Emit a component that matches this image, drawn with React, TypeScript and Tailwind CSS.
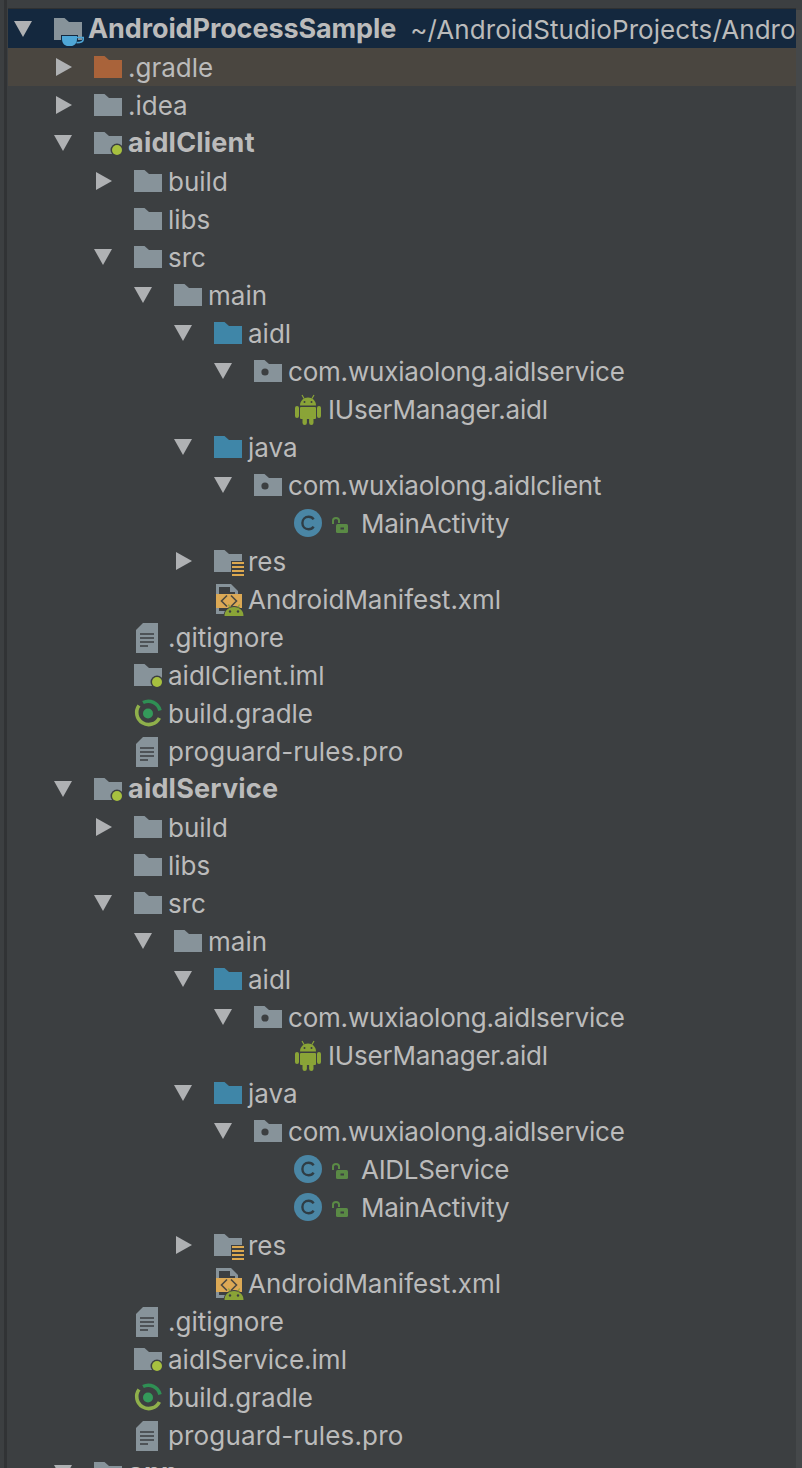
import type { JSX } from "react";

type IconName =
  | "project"
  | "folderOrange"
  | "folder"
  | "module"
  | "source"
  | "pkg"
  | "res"
  | "android"
  | "manifest"
  | "text"
  | "gradle"
  | "cls";

type Row = {
  depth: number;
  arrow?: "open" | "closed";
  icon: IconName;
  label: string;
  hint?: string;
  bold?: boolean;
  lock?: boolean;
  tone?: "selected" | "ignored";
};

const FOLDER = "M0 0H10.5L15 4H28V22H0Z";

const FolderIcon = ({ fill, children }: { fill: string; children?: JSX.Element | JSX.Element[] }) => (
  <svg width="34" height="30" viewBox="0 0 34 30" className="overflow-visible">
    <path d={FOLDER} fill={fill} transform="translate(0 4)" />
    {children}
  </svg>
);

const Glyph = ({ name }: { name: IconName }) => {
  switch (name) {
    case "project":
      return (
        <FolderIcon fill="#87939a">
          <path d="M7 21H24V25C24 30 20.5 33 17 33H14C10.5 33 7 30 7 25Z" fill="#14283e" />
          <path d="M8 22H23V25C23 29.5 20 32 17 32H14C11 32 8 29.5 8 25Z" fill="#4ea6d6" />
          <path d="M23 23.5H29.2V25.5C29.2 27.5 26 28.6 22.5 28.6" fill="none" stroke="#4ea6d6" strokeWidth="1.6" />
        </FolderIcon>
      );
    case "folderOrange":
      return <FolderIcon fill="#a9633a" />;
    case "folder":
      return <FolderIcon fill="#87939a" />;
    case "module":
      return (
        <FolderIcon fill="#87939a">
          <circle cx="23" cy="22" r="6.5" fill="#3c3f41" />
          <circle cx="23" cy="22" r="5" fill="#a7c03f" />
        </FolderIcon>
      );
    case "source":
      return <FolderIcon fill="#3f86a8" />;
    case "pkg":
      return (
        <FolderIcon fill="#87939a">
          <circle cx="11" cy="16" r="3.6" fill="#3c3f41" />
        </FolderIcon>
      );
    case "res":
      return (
        <FolderIcon fill="#87939a">
          <rect x="17" y="15" width="15" height="16" fill="#3c3f41" />
          <path d="M18 17H30M18 21H30M18 25H30M18 29H30" stroke="#dca84f" strokeWidth="1.8" />
        </FolderIcon>
      );
    case "android":
      return (
        <svg width="28" height="30" viewBox="0 0 28 30" className="overflow-visible">
          <path d="M8 1L10 4.5M20 1L18 4.5" stroke="#8aa437" strokeWidth="1.2" />
          <path d="M6 11.5C6 7 9.5 3.5 14 3.5S22 7 22 11.5Z" fill="#8aa437" />
          <circle cx="10.5" cy="8" r="1" fill="#3c3f41" />
          <circle cx="17.5" cy="8" r="1" fill="#3c3f41" />
          <rect x="6" y="13" width="16" height="12" rx="1" fill="#8aa437" />
          <rect x="1" y="12" width="4" height="12" rx="2" fill="#8aa437" />
          <rect x="23" y="12" width="4" height="12" rx="2" fill="#8aa437" />
          <rect x="8.5" y="22" width="4.4" height="9" rx="2.2" fill="#8aa437" />
          <rect x="15.1" y="22" width="4.4" height="9" rx="2.2" fill="#8aa437" />
        </svg>
      );
    case "manifest":
      return (
        <svg width="34" height="30" viewBox="0 0 34 30" className="overflow-visible">
          <path d="M2 0H17L24 7V30H2Z" fill="#87939a" />
          <path d="M5 3H16V8H21V11H5Z" fill="#3c3f41" />
          <rect x="5" y="24" width="16" height="3" fill="#3c3f41" />
          <rect x="2" y="10" width="26" height="14" fill="#dca955" />
          <path d="M13 11.5L7.5 17L13 22.5M17 11.5L22.5 17L17 22.5" fill="none" stroke="#4b4a42" strokeWidth="1.6" />
          <path d="M9.5 33C9.5 26 14 22 20 22S30.5 26 30.5 33Z" fill="#3c3f41" />
          <path d="M10.5 32C10.5 26.5 14.5 23 20 23S29.5 26.5 29.5 32Z" fill="#8aa437" />
          <path d="M14.5 20.5L16 23.5M25.5 20.5L24 23.5" stroke="#8aa437" strokeWidth="1.2" />
          <circle cx="16" cy="27.5" r="1.2" fill="#3c3f41" />
          <circle cx="24" cy="27.5" r="1.2" fill="#3c3f41" />
        </svg>
      );
    case "text":
      return (
        <svg width="28" height="30" viewBox="0 0 28 30" className="overflow-visible">
          <path d="M2 8L9 1H24V31H2Z" fill="#87939a" />
          <path d="M6 12H20M6 16H20M6 20H20M6 24H14" stroke="#3c3f41" strokeWidth="1.6" />
        </svg>
      );
    case "gradle":
      return (
        <svg width="28" height="30" viewBox="0 0 28 30" className="overflow-visible">
          <path d="M5 7.5A12 12 0 1 0 25.4 20" fill="none" stroke="#8fb04b" strokeWidth="3.6" />
          <path d="M9 4.5A12 12 0 0 1 26 12.5" fill="none" stroke="#2f8f54" strokeWidth="3.6" />
          <circle cx="14" cy="15.5" r="5" fill="#349a5a" />
        </svg>
      );
    case "cls":
      return (
        <svg width="28" height="30" viewBox="0 0 28 30" className="overflow-visible">
          <circle cx="14" cy="15" r="14" fill="#4a86a5" />
          <path d="M19.6 11.4C18.5 9.6 16.6 8.8 14.6 8.8C11 8.8 8.4 11.4 8.4 15S11 21.2 14.6 21.2C16.6 21.2 18.5 20.4 19.6 18.6" fill="none" stroke="#2f3d45" strokeWidth="2.4" />
        </svg>
      );
  }
};

const Arrow = ({ kind }: { kind: "open" | "closed" }) =>
  kind === "open" ? (
    <svg width="18" height="16" viewBox="0 0 18 16"><path d="M0 0H18L9 16Z" fill="#afb1b3" /></svg>
  ) : (
    <svg width="16" height="18" viewBox="0 0 16 18" className="ml-[2px]"><path d="M0 0L16 9L0 18Z" fill="#afb1b3" /></svg>
  );

const Lock = () => (
  <svg width="16" height="16" viewBox="0 0 16 16" className="ml-[4px] mr-[13px] mt-[3px]">
    <path d="M1 7V3.5C1 1.9 2.3 1 4 1S7 1.9 7 3.5V6" fill="none" stroke="#5a8a45" strokeWidth="2" />
    <rect x="4" y="7" width="12" height="9" rx="1.5" fill="#5a8a45" />
    <rect x="8.5" y="10.5" width="3.5" height="2" fill="#3c3f41" />
  </svg>
);

const moduleRows = (name: string, pkg: string, classes: string[]): Row[] => [
  { depth: 1, arrow: "open", icon: "module", label: name, bold: true },
  { depth: 2, arrow: "closed", icon: "folder", label: "build" },
  { depth: 2, icon: "folder", label: "libs" },
  { depth: 2, arrow: "open", icon: "folder", label: "src" },
  { depth: 3, arrow: "open", icon: "folder", label: "main" },
  { depth: 4, arrow: "open", icon: "source", label: "aidl" },
  { depth: 5, arrow: "open", icon: "pkg", label: "com.wuxiaolong.aidlservice" },
  { depth: 6, icon: "android", label: "IUserManager.aidl" },
  { depth: 4, arrow: "open", icon: "source", label: "java" },
  { depth: 5, arrow: "open", icon: "pkg", label: pkg },
  ...classes.map((label): Row => ({ depth: 6, icon: "cls", label, lock: true })),
  { depth: 4, arrow: "closed", icon: "res", label: "res" },
  { depth: 4, icon: "manifest", label: "AndroidManifest.xml" },
  { depth: 2, icon: "text", label: ".gitignore" },
  { depth: 2, icon: "module", label: `${name}.iml` },
  { depth: 2, icon: "gradle", label: "build.gradle" },
  { depth: 2, icon: "text", label: "proguard-rules.pro" },
];

const rows: Row[] = [
  { depth: 0, arrow: "open", icon: "project", label: "AndroidProcessSample", hint: "~/AndroidStudioProjects/Andro", bold: true, tone: "selected" },
  { depth: 1, arrow: "closed", icon: "folderOrange", label: ".gradle", tone: "ignored" },
  { depth: 1, arrow: "closed", icon: "folder", label: ".idea" },
  ...moduleRows("aidlClient", "com.wuxiaolong.aidlclient", ["MainActivity"]),
  ...moduleRows("aidlService", "com.wuxiaolong.aidlservice", ["AIDLService", "MainActivity"]),
  { depth: 1, arrow: "open", icon: "folder", label: "app", bold: true },
];

const indent = ["pl-[46px]", "pl-[86px]", "pl-[126px]", "pl-[166px]", "pl-[206px]", "pl-[246px]", "pl-[286px]"];
const arrowLeft = ["left-[6px]", "left-[46px]", "left-[86px]", "left-[126px]", "left-[166px]", "left-[206px]", "left-[246px]"];

const labelClass = (row: Row) => {
  if (row.bold) return row.depth === 0 ? "font-bold text-[27px] tracking-[-0.1px]" : "font-bold text-[27px] tracking-[0.2px]";
  if (row.icon === "pkg" || row.icon === "android") return "tracking-[-0.2px]";
  if (row.icon === "cls") return "tracking-[-0.3px]";
  if (row.label.startsWith("proguard")) return "tracking-[0.15px]";
  return "";
};

const TreeRow = ({ row }: { row: Row }) => {
  const tone =
    row.tone === "selected"
      ? "h-[39px] pt-px bg-[#14283e]"
      : row.tone === "ignored"
        ? "h-[38px] bg-[#4a4640]"
        : "h-[38px]";
  return (
    <li className={`relative flex items-center whitespace-nowrap overflow-hidden ${indent[row.depth]} ${tone}`}>
      {row.arrow && (
        <span className={`absolute top-0 flex h-full items-center ${arrowLeft[row.depth]}`}>
          <Arrow kind={row.arrow} />
        </span>
      )}
      <span className="flex w-[34px] shrink-0">
        <Glyph name={row.icon} />
      </span>
      {row.lock && <Lock />}
      <span className={labelClass(row)}>{row.label}</span>
      {row.hint && <span className="ml-[14px] tracking-[0.07px]">{row.hint}</span>}
    </li>
  );
};

export default function App() {
  return (
    <div className="flex h-[1468px] w-[802px] overflow-hidden bg-[#3c3f41] font-['Inter',sans-serif] text-[26px] text-[#bbbbbb]">
      <div className="w-[8px] shrink-0 pl-[4px]">
        <div className="h-full w-[3px] bg-[#313335]" />
      </div>
      <div className="flex min-w-0 flex-1 flex-col">
        <div className="h-[9px] shrink-0 border-b border-[#2f3132]" />
        <ul className="min-h-0 flex-1 overflow-hidden">
          {rows.map((row, i) => (
            <TreeRow key={i} row={row} />
          ))}
        </ul>
      </div>
      <div className="mt-[10px] w-[6px] shrink-0 bg-[#45484a]" />
    </div>
  );
}
